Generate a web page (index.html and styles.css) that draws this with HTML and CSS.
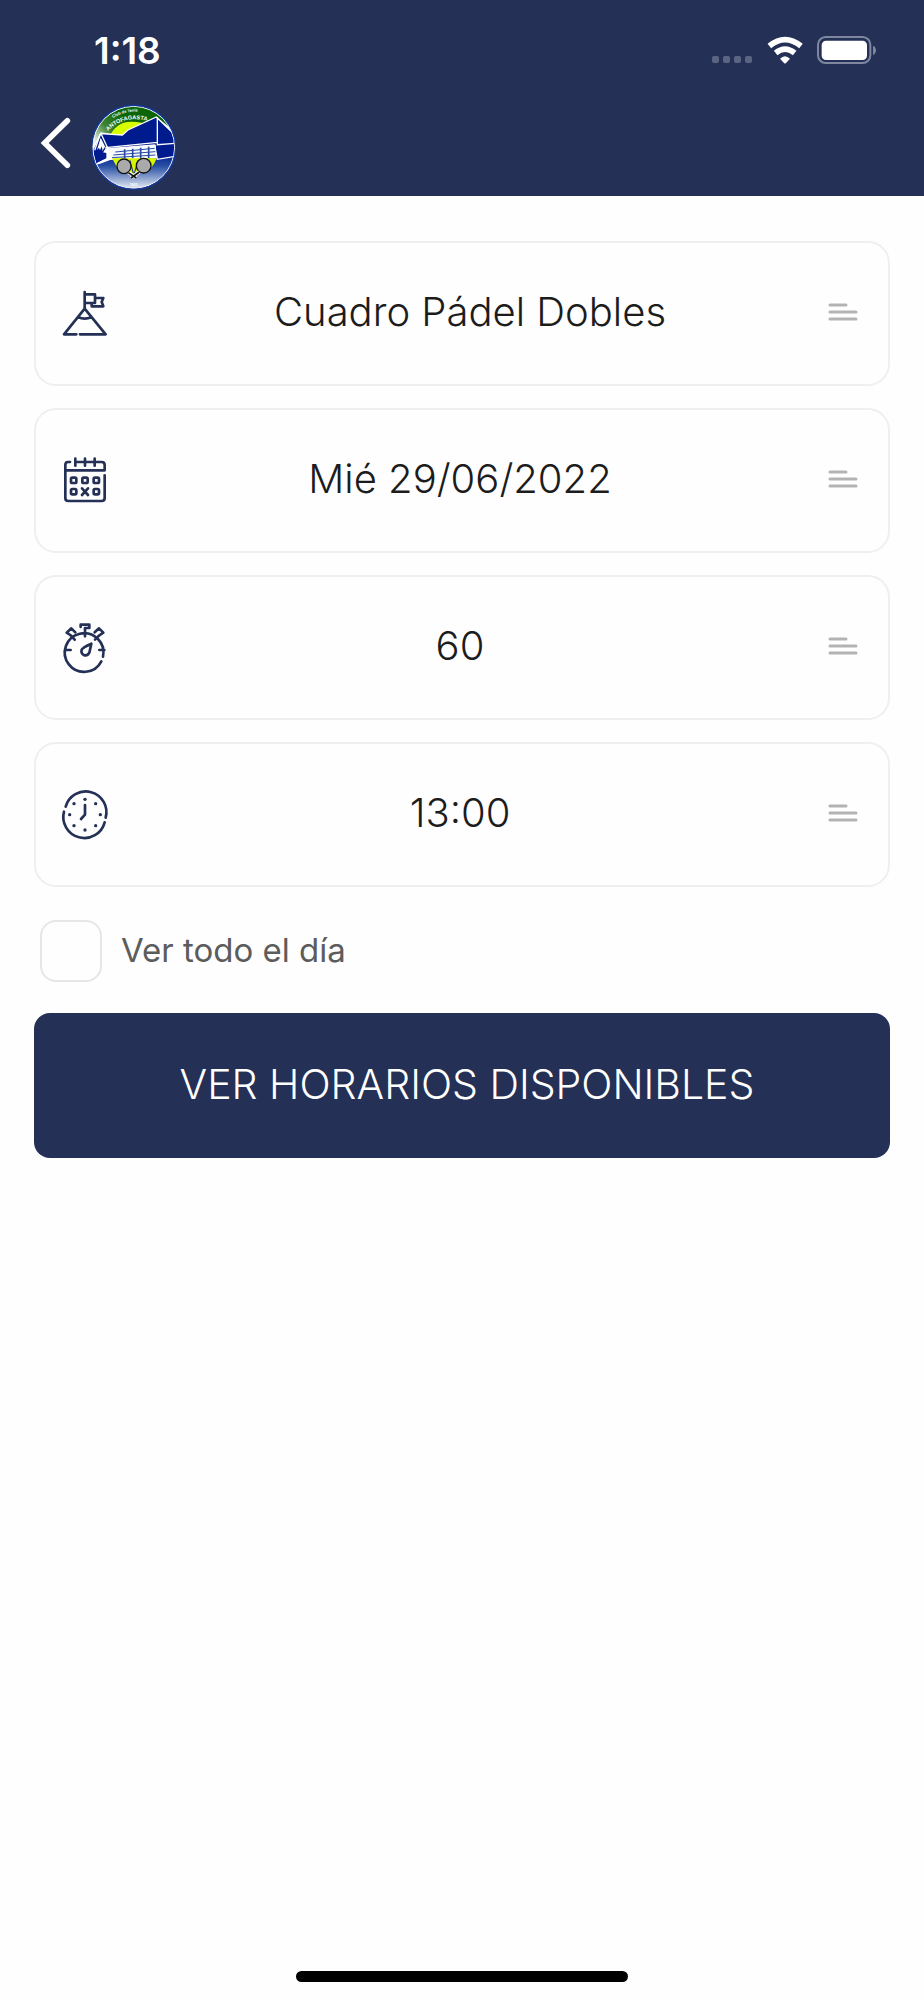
FILE: index.html
```html
<!DOCTYPE html>
<html lang="es">
<head>
<meta charset="utf-8">
<meta name="viewport" content="width=device-width, initial-scale=1">
<title>Reserva de canchas</title>
<link rel="stylesheet" href="styles.css">
</head>
<body>
<header class="header">
  <div class="status">
    <span class="status-time">1:18</span>
    <div class="status-icons">
      <svg class="dots" viewBox="0 0 41 28" aria-hidden="true"><g fill="#5b6582"><rect x="0" y="20" width="7" height="7" rx="2"/><rect x="11" y="20" width="7" height="7" rx="2"/><rect x="22" y="20" width="7" height="7" rx="2"/><rect x="33" y="20" width="7" height="7" rx="2"/></g></svg>
      <svg class="wifi" viewBox="231 48 108 84" aria-hidden="true"><g fill="none" stroke="#fff" stroke-width="17"><path d="M238 78Q285 40 333 78"/><path d="M257 99Q285 76 314 99"/></g><path fill="#fff" d="M270 116Q285 101 300 116L288 129Q285 132 282 129Z"/></svg>
      <svg class="battery" viewBox="381 48 180 84" aria-hidden="true"><rect x="384" y="51" width="157" height="78" rx="23" fill="none" stroke="#7f87a0" stroke-width="6"/><rect x="395" y="62" width="136" height="58" rx="13" fill="#fff"/><path fill="#7f87a0" d="M549 77Q558 81 558 91T549 105Z"/></svg>
    </div>
  </div>
  <nav class="nav">
    <button class="back" type="button" aria-label="Volver"><svg viewBox="30 288 96 162" aria-hidden="true"><path d="M112 302L44 369L112 436" fill="none" stroke="#fff" stroke-width="17" stroke-linecap="round" stroke-linejoin="miter"/></svg></button>
    <svg class="logo" viewBox="33 27 258 258" role="img" aria-label="Club de Tenis Antofagasta">
      <defs>
        <clipPath id="disc"><circle cx="161" cy="157" r="122"/></clipPath>
        <linearGradient id="grass" gradientUnits="userSpaceOnUse" x1="45" y1="150" x2="135" y2="65"><stop offset="0" stop-color="#fff"/><stop offset=".5" stop-color="#3d8330"/><stop offset="1" stop-color="#0c6508"/></linearGradient>
        <linearGradient id="court" x1="0" y1="0" x2="0" y2="1"><stop offset="0" stop-color="#0b2390"/><stop offset=".3" stop-color="#2850a4"/><stop offset="1" stop-color="#fff"/></linearGradient>
        <pattern id="strings" width="5" height="5" patternUnits="userSpaceOnUse"><rect width="5" height="5" fill="#ccc"/><path d="M0 0L5 5M5 0L0 5" stroke="#777" stroke-width="1"/></pattern>
        <path id="arc-small" d="M99 69Q134 47 190 49"/>
        <path id="arc-name" d="M84 108Q138 50 236 88"/>
      </defs>
      <g clip-path="url(#disc)">
        <rect x="33" y="27" width="258" height="258" fill="#fff"/>
        <path d="M33 27H291V145L240 120H110L62 112L40 165Z" fill="url(#grass)"/>
        <path d="M88 126Q108 81 152 80Q184 79 210 92L232 112L110 140Z" fill="#d7ff00"/>
        <path d="M36 210L58 207L105 190H246L290 180V290H36Z" fill="url(#court)"/>
        <path d="M229 66L289 112V126Z" fill="#fff"/>
        <path d="M62 116L127 120L144 105L229 66L287 122V184L232 193L224 150L78 162L46 215L38 165Z" fill="#001b8d" stroke="#fff" stroke-width="4"/>
        <path d="M232 66V149L286 145M77 158L232 142M64 118L88 170M61 118L44 166" fill="none" stroke="#fff" stroke-width="4"/>
        <path d="M62 128L51 165L57 158L60 166L65 154L68 168L73 157L80 164Z" fill="#fff"/>
        <path d="M83 164L228 151V190L92 195Z" fill="#f8fafc"/>
        <g stroke="#274aa2" stroke-width="3"><path d="M106 171L224 160M100 180L226 170M96 188L226 180"/><path d="M134 163V190M158 161V190M182 158V190M206 155V190" stroke-width="5"/></g>
        <path d="M50 168V204L79 190V174Z" fill="#001b8d"/>
        <path d="M96 190H230Q226 204 213 218H186L166 240H156L135 218H112Z" fill="#d7f500"/>
        <path d="M150 196L160 235M174 196L163 235" stroke="#0b2390" stroke-width="3"/>
        <g stroke="#111" stroke-width="4"><ellipse cx="132" cy="214" rx="21" ry="22" fill="url(#strings)"/><ellipse cx="191" cy="212" rx="22" ry="22" fill="url(#strings)"/></g>
        <path d="M145 233L169 248M178 231L153 248" stroke="#fff" stroke-width="10"/><path d="M145 233L169 249M178 231L153 249" stroke="#111" stroke-width="5"/>
        <g class="logo-text"><text font-size="12"><textPath href="#arc-small">Club de Tenis</textPath></text><text font-size="17"><textPath href="#arc-name">ANTOFAGASTA</textPath></text><text x="149" y="274" font-size="11">1921</text></g>
      </g>
      <circle cx="161" cy="157" r="123" fill="none" stroke="#fff" stroke-width="3"/><circle cx="161" cy="157" r="126" fill="none" stroke="#123aa5" stroke-width="4"/>
    </svg>
  </nav>
</header>

<main class="form">
  <button class="field field-court" type="button" aria-haspopup="listbox">
    <svg class="icon" viewBox="36 27 144 144" aria-hidden="true"><path d="M79 160H42L104 83L167 160H90M84 108Q104 118 125 108M104 83V33M104 40H135V66H104M135 51H160L155 63L160 76H125V66"/></svg>
    <span class="value">Cuadro Pádel Dobles</span>
    <svg class="menu" viewBox="0 0 30 18" aria-hidden="true"><path d="M2 2H18M2 9H28M2 16H28"/></svg>
  </button>
  <button class="field" type="button" aria-haspopup="dialog">
    <svg class="icon" viewBox="36 35 144 144" aria-hidden="true"><path d="M60 50H54Q46 50 46 59V158Q46 167 55 167H155Q164 167 164 158V90M46 75H164V59Q164 50 155 50H76M76 40V61M105 40V61M134 40V61"/><g><rect x="63" y="97" width="16" height="16" rx="4"/><rect x="97" y="97" width="16" height="16" rx="4"/><rect x="131" y="97" width="16" height="16" rx="4"/><rect x="63" y="131" width="16" height="16" rx="4"/><rect x="131" y="131" width="16" height="16" rx="4"/></g><path d="M96 129L114 149M114 129L96 149"/></svg>
    <span class="value">Mié 29/06/2022</span>
    <svg class="menu" viewBox="0 0 30 18" aria-hidden="true"><path d="M2 2H18M2 9H28M2 16H28"/></svg>
  </button>
  <button class="field" type="button" aria-haspopup="listbox">
    <svg class="icon" viewBox="36 37 144 144" aria-hidden="true"><path d="M154 149A58 58 0 1 1 159 135M105 74V58M92 46V39H118V49H105V58M47 115H62M148 115H163M62 71L74 84M148 71L135 84M65 73L50 63L64 50L76 62M145 73L160 63L147 50L134 62"/><path d="M124 96L118 123Q113 133 103 131Q92 126 95 114Q99 107 124 96Z"/></svg>
    <span class="value">60</span>
    <svg class="menu" viewBox="0 0 30 18" aria-hidden="true"><path d="M2 2H18M2 9H28M2 16H28"/></svg>
  </button>
  <button class="field" type="button" aria-haspopup="listbox">
    <svg class="icon" viewBox="36 33 144 144" aria-hidden="true"><path d="M47 80A62 62 0 0 1 167 113M164 127A62 62 0 0 1 42 95M105 75V104L93 117"/><g class="ticks"><circle cx="105" cy="58" r="5"/><circle cx="137" cy="71" r="5"/><circle cx="151" cy="104" r="5"/><circle cx="137" cy="137" r="5"/><circle cx="105" cy="150" r="5"/><circle cx="72" cy="137" r="5"/><circle cx="59" cy="104" r="5"/><circle cx="72" cy="71" r="5"/></g></svg>
    <span class="value">13:00</span>
    <svg class="menu" viewBox="0 0 30 18" aria-hidden="true"><path d="M2 2H18M2 9H28M2 16H28"/></svg>
  </button>
  <div class="option">
    <input class="check" type="checkbox" id="all-day">
    <label class="option-label" for="all-day">Ver todo el día</label>
  </div>
  <button class="submit" type="submit">VER HORARIOS DISPONIBLES</button>
</main>
<footer class="home"><div class="home-bar"></div></footer>
</body>
</html>
```

FILE: styles.css
```css
* { box-sizing: border-box; }

body {
  margin: 0;
  min-height: 100vh;
  display: flex;
  flex-direction: column;
  background: #fefefe;
  color: #1c1c1c;
  font-family: Inter, "Liberation Sans", sans-serif;
}

button { font: inherit; color: inherit; cursor: pointer; }
svg { display: block; flex: none; overflow: visible; }

.header { background: #243055; color: #fff; padding-bottom: 6px; }

.status {
  height: 100px;
  padding: 0 47px 0 94px;
  display: flex;
  align-items: center;
  justify-content: space-between;
}
.status-time { font-size: 37px; font-weight: 600; }
.status-icons { display: flex; align-items: center; gap: 14px; }
.dots { width: 41px; height: 28px; }
.wifi { width: 36px; height: 28px; }
.battery { width: 60px; height: 28px; }

.nav { display: flex; align-items: center; gap: 19px; padding: 4px 40px 0; }
.back { padding: 0; border: 0; background: none; }
.back svg { width: 32px; height: 54px; margin-bottom: 8px; }
.logo { width: 86px; height: 86px; }
.logo-text {
  fill: #fff;
  font-family: "Liberation Sans", sans-serif;
  font-weight: 700;
}

.form { display: flex; flex-direction: column; padding: 45px 34px; }

.field {
  min-height: 145px;
  margin-bottom: 22px;
  padding: 0 30px 0 26px;
  display: grid;
  grid-template-columns: 48px 1fr 48px;
  align-items: center;
  border: 2px solid #efefef;
  border-radius: 22px;
  background: #fefefe;
}
.value {
  margin-bottom: 4px;
  font-size: 40px;
  font-weight: 300;
  text-align: center;
}
.field-court .value { padding-left: 20px; }

.icon {
  width: 48px;
  height: 48px;
  fill: none;
  stroke: #243055;
  stroke-width: 8;
  stroke-linecap: round;
  stroke-linejoin: round;
}
.ticks { fill: #243055; stroke: none; }
.menu {
  width: 30px;
  height: 18px;
  margin-bottom: 4px;
  justify-self: end;
  fill: none;
  stroke: #b3b3b3;
  stroke-width: 3;
  stroke-linecap: round;
}

.option {
  display: flex;
  align-items: center;
  gap: 19px;
  margin: 11px 0 31px;
  padding-left: 6px;
  color: #5c5c5c;
  font-size: 33px;
}
.option-label { margin-bottom: 2px; }
.check {
  appearance: none;
  width: 62px;
  height: 62px;
  margin: 0;
  border: 2px solid #e6e6e6;
  border-radius: 16px;
  background: #fefefe;
}
.check:checked { background: #243055; }

.submit {
  min-height: 145px;
  padding: 0 0 4px 10px;
  border: 0;
  border-radius: 16px;
  background: #243055;
  color: #fff;
  font-size: 41px;
  font-weight: 300;
}

.home { margin-top: auto; padding-bottom: 18px; }
.home-bar {
  width: 36%;
  height: 11px;
  margin: 0 auto;
  border-radius: 6px;
  background: #000;
}
```
